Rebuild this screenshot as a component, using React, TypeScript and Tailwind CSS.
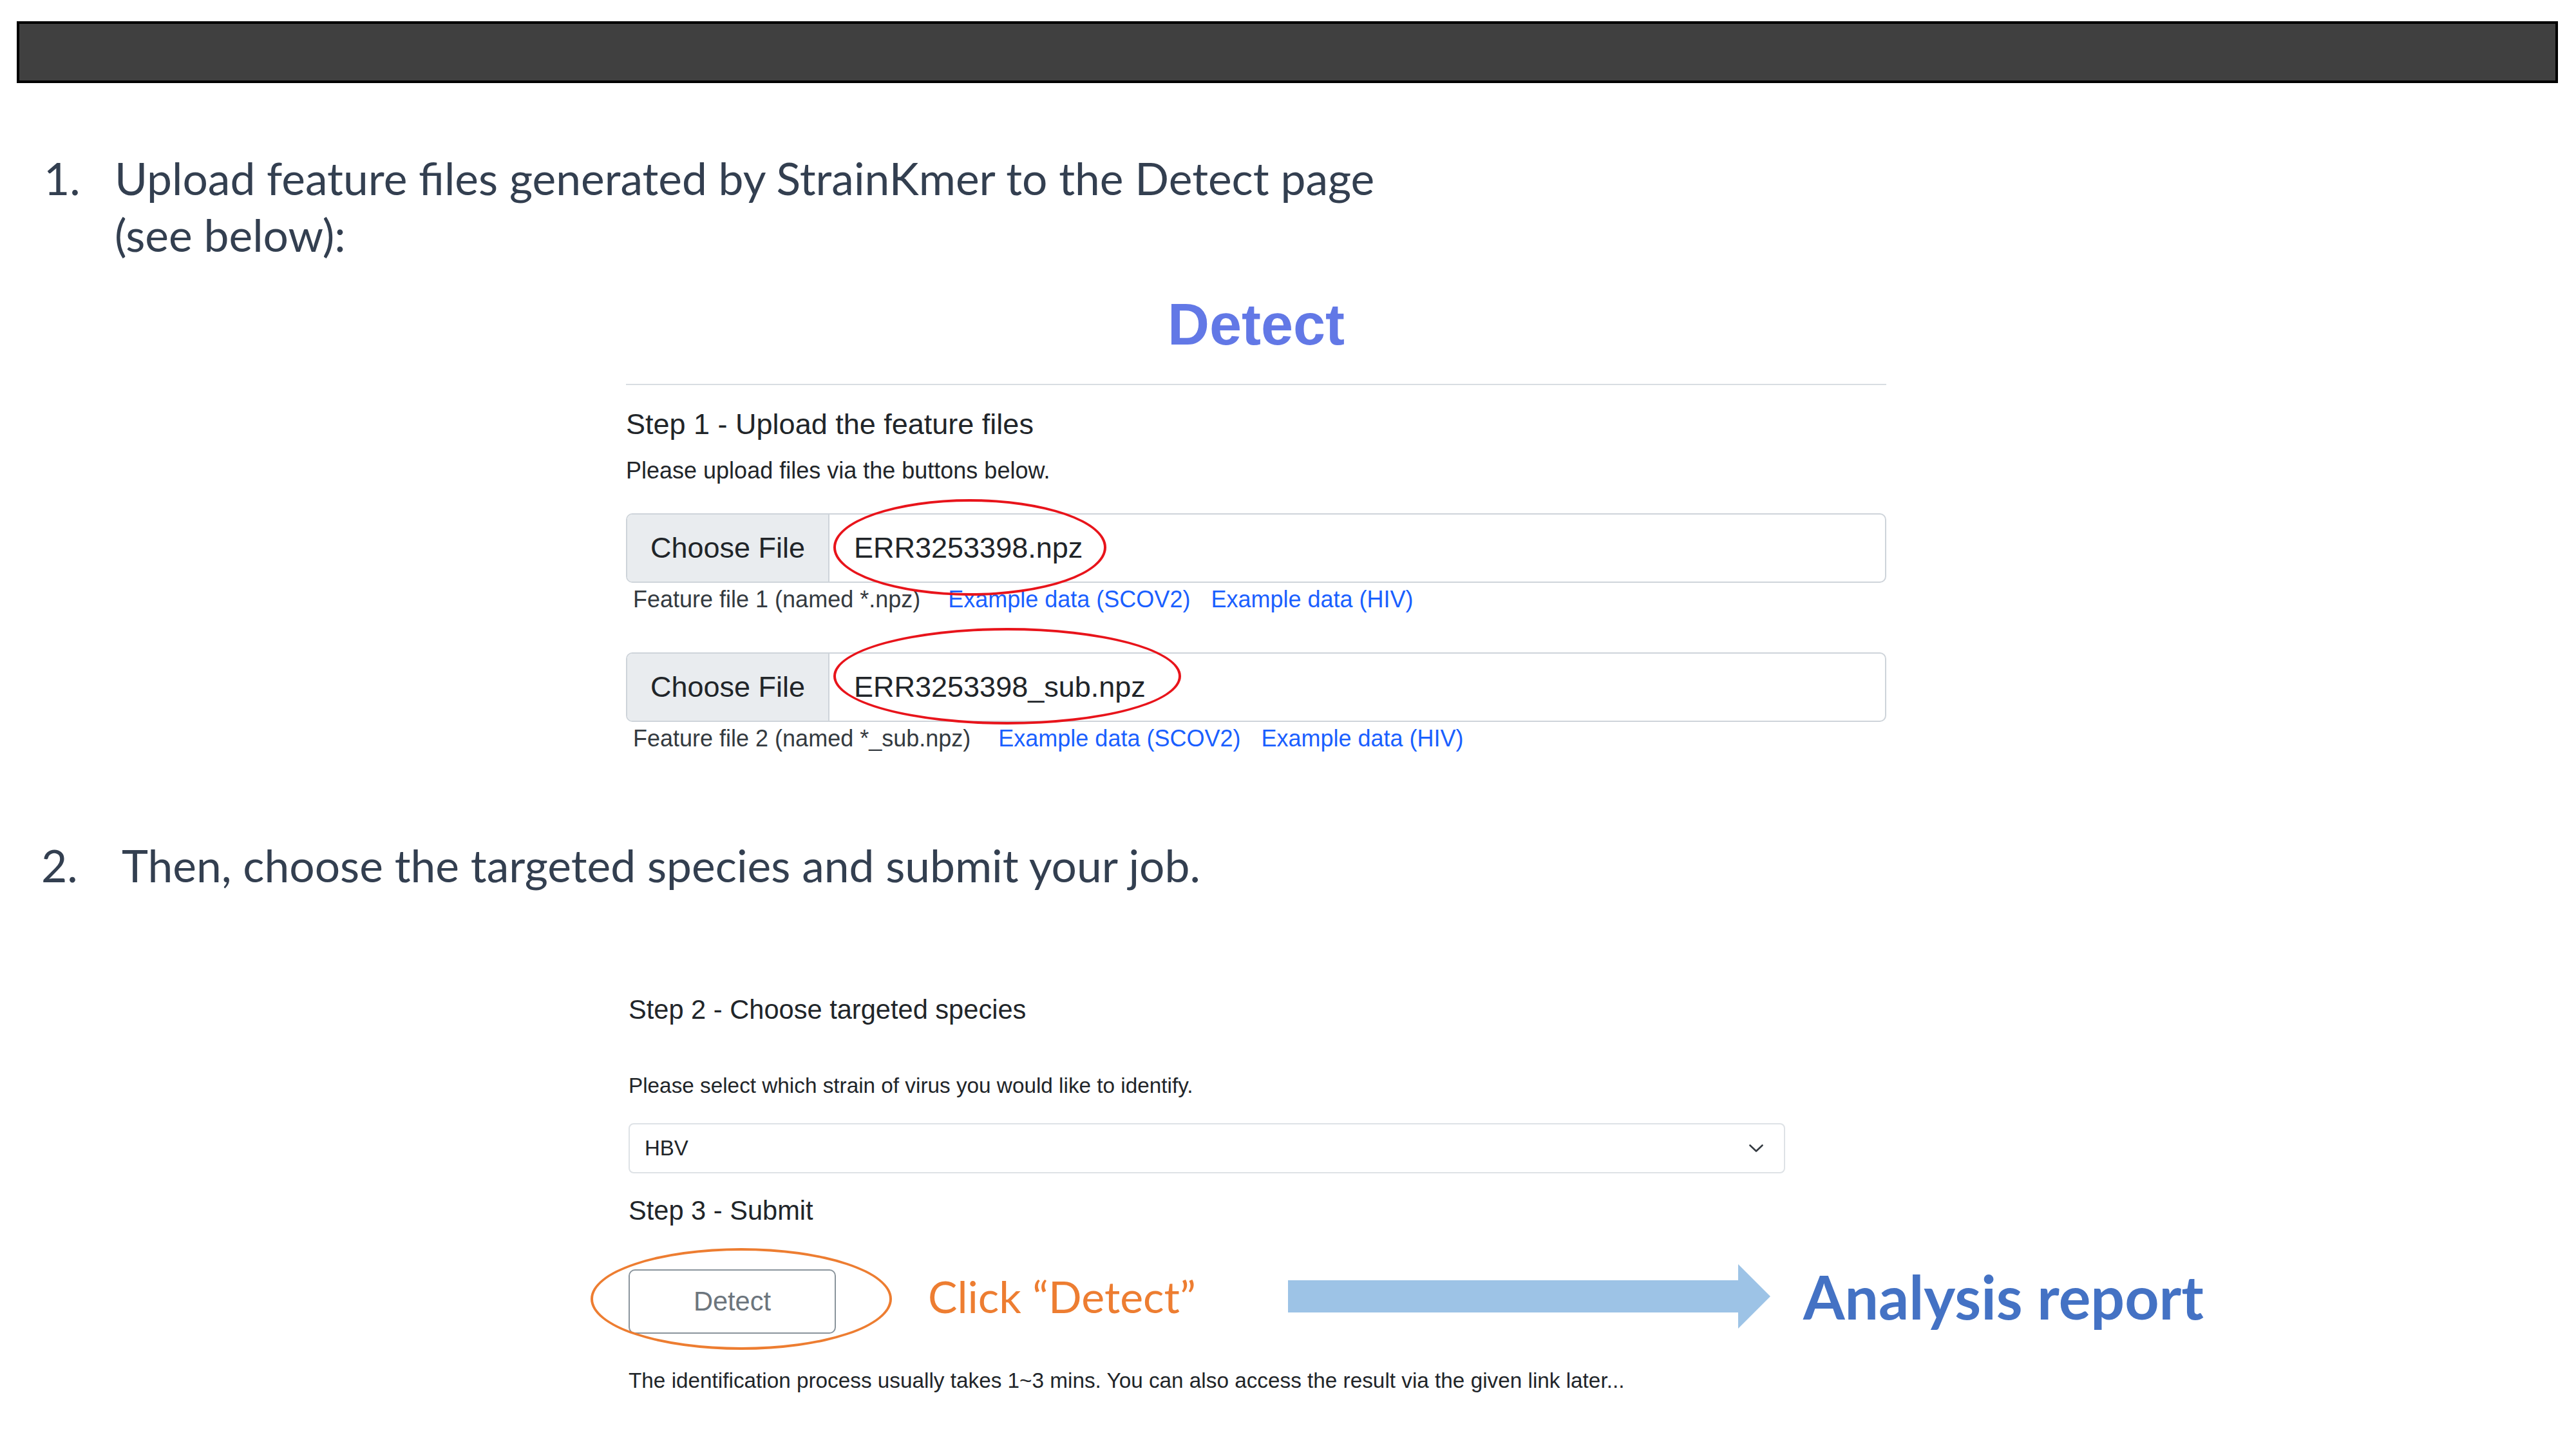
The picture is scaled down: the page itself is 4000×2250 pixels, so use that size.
import { Fragment } from 'react';

const uploads = [
  {
    id: 'npz',
    file: 'ERR3253398.npz',
    label: 'Feature file 1 (named *.npz)',
    ring: 'top-[-24px] w-[424px]',
    gap: 'mt-[48px]',
  },
  {
    id: 'sub',
    file: 'ERR3253398_sub.npz',
    label: 'Feature file 2 (named *_sub.npz)',
    ring: 'top-[-40px] w-[540px]',
    gap: 'mt-[64px]',
  },
];

function FileField({ file, ring }: { file: string; ring: string }) {
  return (
    <div className="relative flex h-[108px] w-full items-stretch rounded-[10px] border-2 border-[#ced4da] bg-white text-[45px] text-[#212529]">
      <div className="flex w-[314px] items-center rounded-l-[8px] border-r-2 border-[#ced4da] bg-[#e9ecef] pl-[36px]">
        Choose File
      </div>
      <div className="flex items-center pl-[38px]">{file}</div>
      {/* hand-drawn red ring from the slide */}
      <div
        className={`pointer-events-none absolute left-[320px] h-[150px] rounded-[50%] border-[4px] border-[#e8141b] ${ring}`}
      />
    </div>
  );
}

export default function App() {
  return (
    <div className="flex h-[2250px] w-[4000px] flex-col overflow-hidden bg-white">
      <div className="ml-[26px] mt-[33px] h-[96px] w-[3946px] border-4 border-black bg-[#404040]" />

      {/* step 1 caption */}
      <div className="mt-[103px] flex font-['Lato',sans-serif] text-[69.5px] leading-[88px] text-[#333f50]">
        <span className="ml-[68px] w-[110px]">1.</span>
        <span className="whitespace-nowrap">
          Upload feature files generated by StrainKmer to the Detect page
          <br />
          (see below):
        </span>
      </div>

      <div className="ml-[972px] mt-[51px] w-[1957px] font-['Liberation_Sans',Arial,sans-serif]">
        <h1 className="text-center text-[90px] font-bold leading-none text-[#6278e6]">Detect</h1>
        <div className="mt-[47px] h-[2px] bg-[#d8dde2]" />
        <h5 className="mt-[38px] text-[45px] leading-none text-[#212529]">Step 1 - Upload the feature files</h5>
        <p className="mt-[32px] text-[36px] leading-none text-[#212529]">Please upload files via the buttons below.</p>

        {uploads.map((u) => (
          <Fragment key={u.id}>
            <div className={u.gap}>
              <FileField file={u.file} ring={u.ring} />
            </div>
            <div className="mt-[8px] flex pl-[11px] text-[36px] leading-none whitespace-nowrap">
              <span className="text-[#343a40]">{u.label}</span>
              <a className="ml-[43px] text-[#1a5fff]">Example data (SCOV2)</a>
              <a className="ml-[32px] text-[#1a5fff]">Example data (HIV)</a>
            </div>
          </Fragment>
        ))}
      </div>

      {/* step 2 caption */}
      <div className="mt-[134px] flex font-['Lato',sans-serif] text-[69.5px] leading-[88px] text-[#333f50]">
        <span className="ml-[64px] w-[125px]">2.</span>
        <span className="whitespace-nowrap">Then, choose the targeted species and submit your job.</span>
      </div>

      <div className="ml-[976px] mt-[160px] w-[1796px] font-['Liberation_Sans',Arial,sans-serif] text-[#212529]">
        <h5 className="text-[41.6px] leading-none">Step 2 - Choose targeted species</h5>
        <p className="mt-[80px] text-[33.3px] leading-none">Please select which strain of virus you would like to identify.</p>
        <div className="mt-[42px] flex h-[78px] items-center justify-between rounded-[8px] border-2 border-[#dee2e6] bg-white pl-[23px] pr-[32px] text-[33px]">
          <span>HBV</span>
          <svg width="22" height="12" viewBox="0 0 22 12" fill="none">
            <path d="M1.5 1.5 11 10.5 20.5 1.5" stroke="#343a40" strokeWidth="2.6" strokeLinecap="round" strokeLinejoin="round" />
          </svg>
        </div>
        <h5 className="mt-[37px] text-[41.6px] leading-none">Step 3 - Submit</h5>

        <div className="mt-[71px] flex h-[100px] items-center whitespace-nowrap">
          <div className="relative h-[100px] w-[322px] shrink-0">
            <button className="flex h-full w-full items-center justify-center rounded-[10px] border-2 border-[#8a949c] bg-white text-[41.6px] text-[#6c757d]">
              Detect
            </button>
            <div className="pointer-events-none absolute left-[-59px] top-[-33px] h-[158px] w-[468px] rounded-[50%] border-[4px] border-[#ed7d31]" />
          </div>
          <div className="mb-[16px] w-[702px] shrink-0 pl-[143px] font-['Lato',sans-serif] text-[68px] leading-none text-[#ed7d31]">
            Click “Detect”
          </div>
          <svg className="mb-[16px] shrink-0" width="750" height="100" viewBox="0 0 750 100">
            <path d="M0 25H699V0L749 50 699 100V75H0Z" fill="#9dc3e6" />
          </svg>
          <div className="mb-[16px] ml-[50px] font-['Lato',sans-serif] text-[93px] font-bold leading-none text-[#4472c4]">
            Analysis report
          </div>
        </div>

        <p className="mt-[56px] text-[33.3px] leading-none whitespace-nowrap">
          The identification process usually takes 1~3 mins. You can also access the result via the given link later...
        </p>
      </div>
    </div>
  );
}
